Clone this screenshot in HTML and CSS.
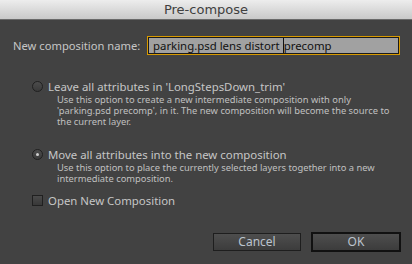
FILE: index.html
```html
<!DOCTYPE html>
<html>
<head>
<meta charset="utf-8">
<link rel="stylesheet" href="styles.css">
</head>
<body>
<div class="dialog">
  <div class="titlebar">Pre-compose</div>
  <div class="name-row">
    <span class="name-label">New composition name:</span>
    <div class="name-input"><span class="sel">parking.psd lens distort </span><span class="caret"></span><span>precomp</span></div>
  </div>
  <div class="option first">
    <div class="opt-head"><span class="radio"></span><span class="opt-label">Leave all attributes in 'LongStepsDown_trim'</span></div>
    <div class="opt-desc">Use this option to create a new intermediate composition with only 'parking.psd precomp', in it. The new composition will become the source to the current layer.</div>
  </div>
  <div class="option second">
    <div class="opt-head"><span class="radio checked"></span><span class="opt-label">Move all attributes into the new composition</span></div>
    <div class="opt-desc">Use this option to place the currently selected layers together into a new intermediate composition.</div>
  </div>
  <div class="check-row"><span class="checkbox"></span><span class="opt-label">Open New Composition</span></div>
  <div class="buttons">
    <div class="btn">Cancel</div>
    <div class="btn default">OK</div>
  </div>
</div>
</body>
</html>
```
FILE: styles.css
```css
html, body {
  margin: 0;
  padding: 0;
  background: #424242;
}
.dialog {
  width: 412px;
  height: 264px;
  font-family: "Noto Sans", sans-serif;
  color: #c6c6c6;
  overflow: hidden;
}
.titlebar {
  height: 20px;
  box-sizing: border-box;
  background: linear-gradient(#ededed, #c9c9c9);
  border-bottom: 1px solid #6a6a6a;
  text-align: center;
  font-family: "DejaVu Sans", sans-serif;
  font-size: 13px;
  line-height: 20px;
  color: #404040;
}
.name-row {
  display: flex;
  align-items: center;
  margin-top: 16px;
  padding-left: 13px;
  height: 19px;
}
.name-label {
  font-size: 11.2px;
  width: 134px;
  white-space: nowrap;
}
.name-input {
  width: 253px;
  height: 19px;
  box-sizing: border-box;
  border: 1px solid #d89a00;
  box-shadow: inset 0 0 0 1px #1a1a1a;
  background: #a1a1a1;
  color: #111;
  font-size: 11.4px;
  line-height: 17px;
  padding-left: 5px;
  display: flex;
  align-items: center;
  white-space: nowrap;
}
.sel {
  white-space: pre;
}
.caret {
  display: inline-block;
  width: 1px;
  height: 15px;
  background: #111;
}
.option {
  padding-left: 32px;
}
.option.first { margin-top: 23px; }
.option.second { margin-top: 19px; }
.opt-head, .check-row {
  display: flex;
  align-items: center;
  height: 16px;
}
.opt-label {
  font-size: 11.4px;
  margin-left: 5px;
  white-space: nowrap;
}
.radio {
  width: 11px;
  height: 11px;
  box-sizing: border-box;
  border-radius: 50%;
  border: 1px solid #202020;
  background: linear-gradient(#4c4c4c, #3a3a3a);
  position: relative;
  flex: none;
}
.radio.checked::after {
  content: "";
  position: absolute;
  left: 3px;
  top: 3px;
  width: 3px;
  height: 3px;
  border-radius: 50%;
  background: #cfcfcf;
}
.opt-desc {
  padding-left: 25px;
  width: 338px;
  font-size: 9.35px;
  line-height: 11px;
  color: #c0c0c0;
}
.check-row {
  padding-left: 32px;
  margin-top: 8px;
}
.checkbox {
  width: 11px;
  height: 11px;
  box-sizing: border-box;
  border: 1px solid #202020;
  background: linear-gradient(#4a4a4a, #383838);
  flex: none;
}
.buttons {
  display: flex;
  justify-content: flex-end;
  align-items: center;
  gap: 10px;
  margin-top: 24px;
  padding-right: 11px;
}
.btn {
  width: 88px;
  height: 18px;
  box-sizing: border-box;
  border: 1px solid #1e1e1e;
  background: linear-gradient(#4e4e4e, #3c3c3c);
  font-size: 12px;
  line-height: 16px;
  text-align: center;
  color: #bcc4ce;
}
.btn.default {
  width: 90px;
  height: 20px;
  border: 2px solid #111;
}
```
